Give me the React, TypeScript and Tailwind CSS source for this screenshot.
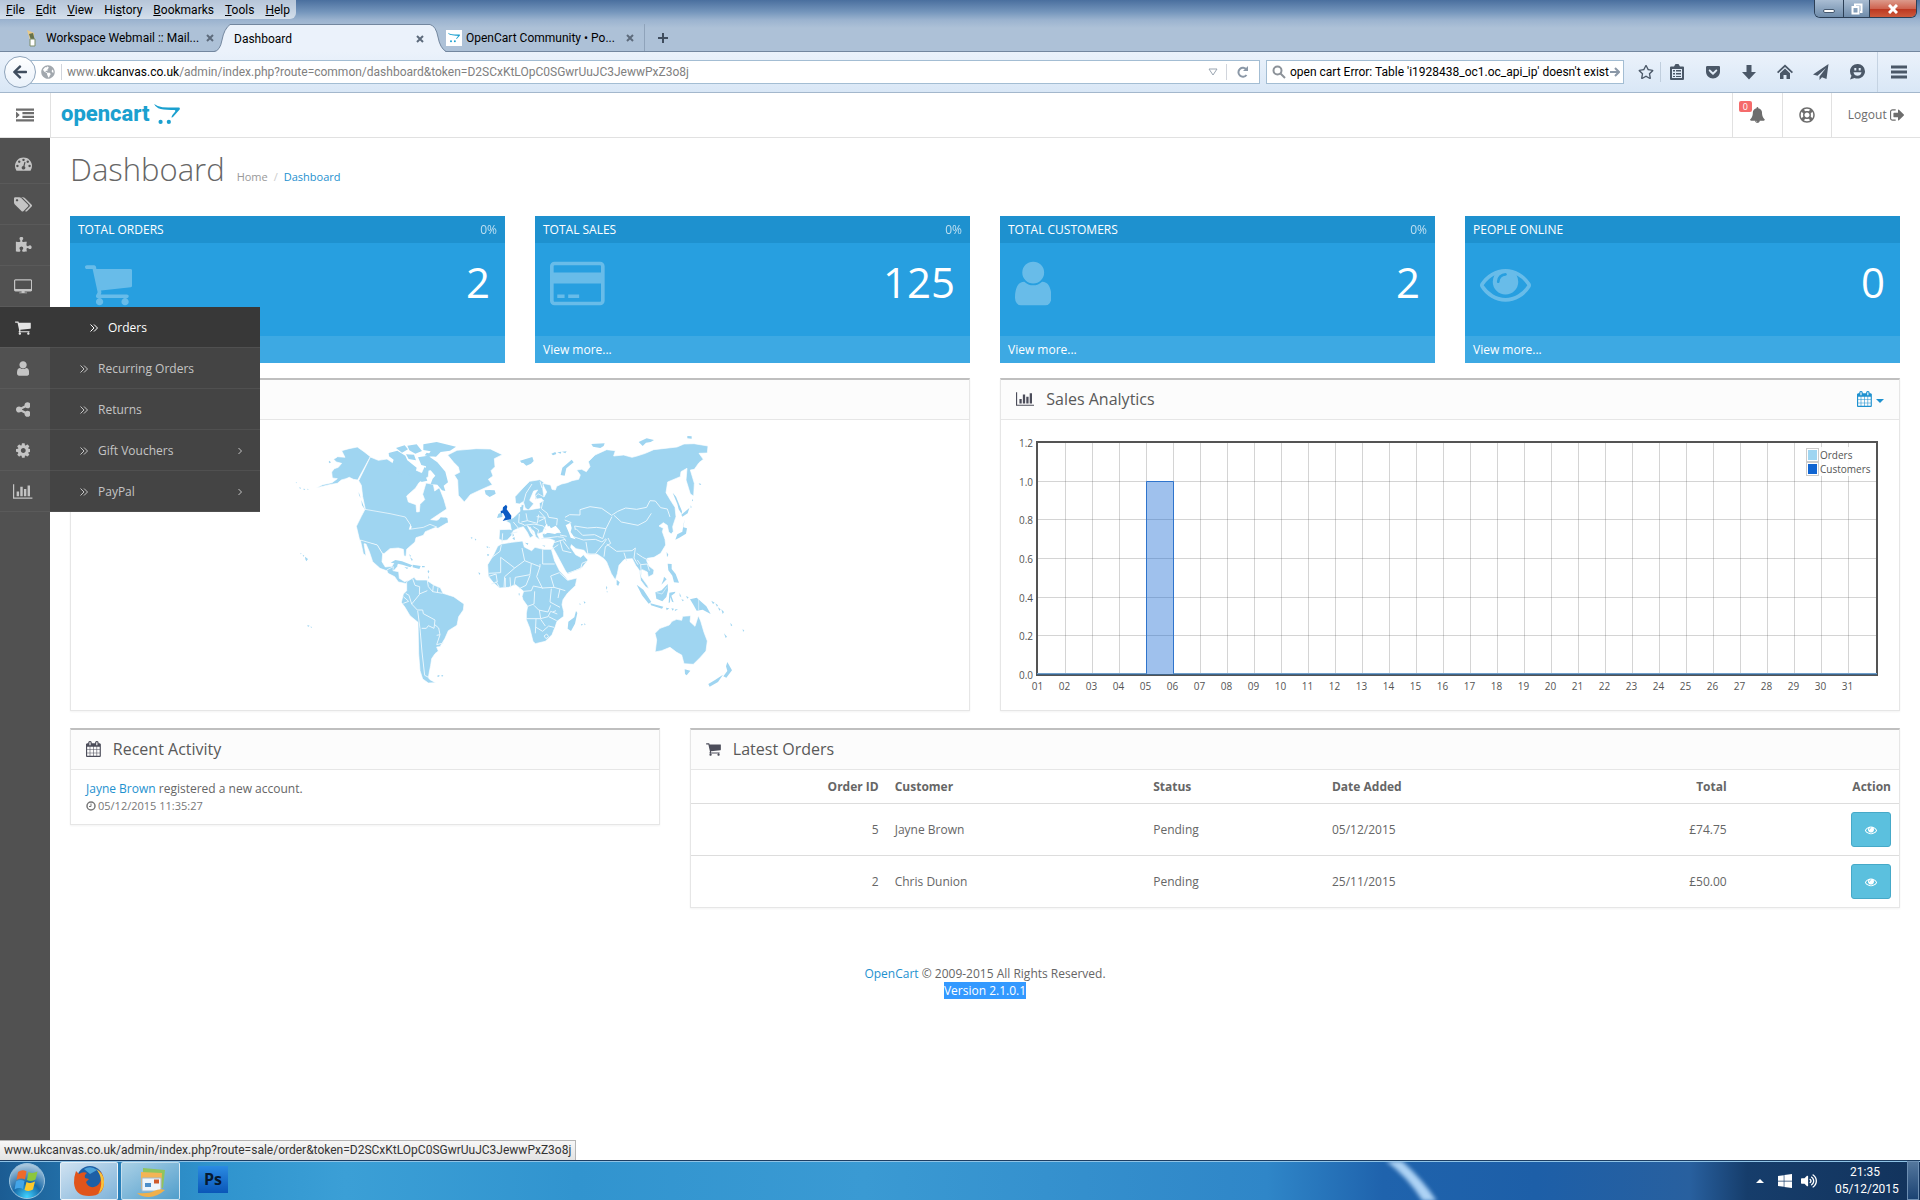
import type { ReactNode } from 'react';
import {
  FaArrowLeft,
  FaGetPocket,
  FaGlobeAmericas,
  FaRegLifeRing,
  FaRegStar,
  FaVolumeUp,
  FaWindows,
} from 'react-icons/fa';

// [viewBox, path]
const glyphs = {
  dashboard: ['0 0 1792 1792', 'M384 1152q0-53-37.5-90.5t-90.5-37.5-90.5 37.5-37.5 90.5 37.5 90.5 90.5 37.5 90.5-37.5 37.5-90.5zm192-448q0-53-37.5-90.5t-90.5-37.5-90.5 37.5-37.5 90.5 37.5 90.5 90.5 37.5 90.5-37.5 37.5-90.5zm428 481l101-382q6-26-7.5-48.5t-38.5-29.5-48 6.5-30 39.5l-101 382q-60 5-107 43.5t-63 98.5q-20 77 20 146t117 89 146-20 89-117q16-60-6-117t-72-91zm660-33q0-53-37.5-90.5t-90.5-37.5-90.5 37.5-37.5 90.5 37.5 90.5 90.5 37.5 90.5-37.5 37.5-90.5zm-640-640q0-53-37.5-90.5t-90.5-37.5-90.5 37.5-37.5 90.5 37.5 90.5 90.5 37.5 90.5-37.5 37.5-90.5zm448 192q0-53-37.5-90.5t-90.5-37.5-90.5 37.5-37.5 90.5 37.5 90.5 90.5 37.5 90.5-37.5 37.5-90.5zm320 448q0 261-141 483-19 29-54 29h-1402q-35 0-54-29-141-221-141-483 0-182 71-348t191-286 286-191 348-71 348 71 286 191 191 286 71 348z'],
  tags: ['0 0 1920 1792', 'M448 448q0-53-37.5-90.5t-90.5-37.5-90.5 37.5-37.5 90.5 37.5 90.5 90.5 37.5 90.5-37.5 37.5-90.5zm1067 576q0 53-37 90l-491 492q-39 37-91 37-53 0-90-37l-715-716q-38-37-64.5-101t-26.5-117v-416q0-52 38-90t90-38h416q53 0 117 26.5t102 64.5l715 714q37 39 37 91zm384 0q0 53-37 90l-491 492q-39 37-91 37-36 0-59-14t-53-45l470-470q37-37 37-90 0-52-37-91l-715-714q-38-38-102-64.5t-117-26.5h224q53 0 117 26.5t102 64.5l715 714q37 39 37 91z'],
  puzzle: ['0 0 1792 1792', 'M1755 1083q0 81-44.5 135t-123.5 54q-41 0-77.5-17.5t-59-38-56.5-38-71-17.5q-110 0-110 124 0 39 16 115t15 115v5q-22 0-33 1-34 3-97.5 11.5t-115.5 13.5-98 5q-61 0-103-26.5t-42-83.5q0-37 17.5-71t38-56.5 38-59 17.5-77.5q0-79-54-123.5t-135-44.5q-84 0-143 45.5t-59 127.5q0 43 15 83t33.5 64.5 33.5 53 15 50.5q0 45-46 89-37 35-117 35-95 0-245-24-9-2-27.5-4t-27.5-4l-13-2q-1 0-3-1-2 0-2-1v-1024q2 1 17.5 3.5t34 5 21.5 3.5q150 24 245 24 80 0 117-35 46-44 46-89 0-22-15-50.5t-33.5-53-33.5-64.5-15-83q0-82 59-127.5t144-45.5q80 0 134 44.5t54 123.5q0 41-17.5 77.5t-38 59-38 56.5-17.5 71q0 57 42 83.5t103 26.5q64 0 180-15t163-17v2q-1 2-3.5 17.5t-5 34-3.5 21.5q-24 150-24 245 0 80 35 117 44 46 89 46 22 0 50.5-15t53-33.5 64.5-33.5 83-15q82 0 127.5 59t45.5 143z'],
  desktop: ['0 0 1920 1792', 'M1792 1120v-832q0-13-9.5-22.5t-22.5-9.5h-1600q-13 0-22.5 9.5t-9.5 22.5v832q0 13 9.5 22.5t22.5 9.5h1600q13 0 22.5-9.5t9.5-22.5zm128-832v972q0 66-47 113t-113 47h-640v96h192q64 0 64 48v48h-832v-48q0-48 64-48h192v-96h-640q-66 0-113-47t-47-113v-972q0-66 47-113t113-47h1600q66 0 113 47t47 113z'],
  cart: ['64 0 1664 1792', 'M704 1536q0 52-38 90t-90 38-90-38-38-90 38-90 90-38 90 38 38 90zm896 0q0 52-38 90t-90 38-90-38-38-90 38-90 90-38 90 38 38 90zm128-1088v512q0 24-16.5 42.5t-40.5 21.5l-1044 122q13 60 13 70 0 16-24 64h920q26 0 45 19t19 45-19 45-45 19h-1024q-26 0-45-19t-19-45q0-11 8-31.5t16-36 21.5-40 15.5-29.5l-177-823h-204q-26 0-45-19t-19-45 19-45 45-19h256q16 0 28.5 6.5t19.5 15.5 13 24.5 8 26 5.5 29.5 4.5 26h1201q26 0 45 19t19 45z'],
  user: ['256 0 1280 1792', 'M1536 1399q0 109-62.5 187t-150.5 78h-854q-88 0-150.5-78t-62.5-187q0-85 8.5-160.5t31.5-152 58.5-131 94-89 134.5-34.5q131 128 313 128t313-128q76 0 134.5 34.5t94 89 58.5 131 31.5 152 8.5 160.5zm-256-887q0 159-112.5 271.5t-271.5 112.5-271.5-112.5-112.5-271.5 112.5-271.5 271.5-112.5 271.5 112.5 112.5 271.5z'],
  share: ['128 0 1536 1792', 'M1344 1024q133 0 226.5 93.5t93.5 226.5-93.5 226.5-226.5 93.5-226.5-93.5-93.5-226.5q0-12 2-34l-360-180q-92 86-218 86-133 0-226.5-93.5t-93.5-226.5 93.5-226.5 226.5-93.5q126 0 218 86l360-180q-2-22-2-34 0-133 93.5-226.5t226.5-93.5 226.5 93.5 93.5 226.5-93.5 226.5-226.5 93.5q-126 0-218-86l-360 180q2 22 2 34t-2 34l360 180q92-86 218-86z'],
  cog: ['128 0 1536 1792', 'M1152 896q0-106-75-181t-181-75-181 75-75 181 75 181 181 75 181-75 75-181zm512-109v222q0 12-8 23t-20 13l-185 28q-19 54-39 91 35 50 107 138 10 12 10 25t-9 23q-27 37-99 108t-94 71q-12 0-26-9l-138-108q-44 23-91 38-16 136-29 186-7 28-36 28h-222q-14 0-24.5-8.5t-11.5-21.5l-28-184q-49-16-90-37l-141 107q-10 9-25 9-14 0-25-11-126-114-165-168-7-10-7-23 0-12 8-23 15-21 51-66.5t54-70.5q-27-50-41-99l-183-27q-13-2-21-12.5t-8-23.5v-222q0-12 8-23t19-13l186-28q14-46 39-92-40-57-107-138-10-12-10-24 0-10 9-23 26-36 98.5-107.5t94.5-71.5q13 0 26 10l138 107q44-23 91-38 16-136 29-186 7-28 36-28h222q14 0 24.5 8.5t11.5 21.5l28 184q49 16 90 37l142-107q9-9 24-9 13 0 25 10 129 119 165 170 7 8 7 22 0 12-8 23-15 21-51 66.5t-54 70.5q26 50 41 98l183 28q13 2 21 12.5t8 23.5z'],
  chart: ['0 0 2048 1792', 'M640 896v512h-256v-512h256zm384-512v1024h-256v-1024h256zm1024 1152v128h-2048v-1536h128v1408h1920zm-640-896v768h-256v-768h256zm384-384v1152h-256v-1152h256z'],
  eye: ['0 0 1792 1792', 'M1664 960q-152-236-381-353 61 104 61 225 0 185-131.5 316.5t-316.5 131.5-316.5-131.5-131.5-316.5q0-121 61-225-229 117-381 353 133 205 333.5 326.5t434.5 121.5 434.5-121.5 333.5-326.5zm-720-384q0-20-14-34t-34-14q-125 0-214.5 89.5t-89.5 214.5q0 20 14 34t34 14 34-14 14-34q0-86 61-147t147-61q20 0 34-14t14-34zm848 384q0 34-20 69-140 230-376.5 368.5t-499.5 138.5-499.5-139-376.5-368q-20-35-20-69t20-69q140-229 376.5-368t499.5-139 499.5 139 376.5 368q20 35 20 69z'],
  card: ['0 0 1920 1792', 'M1760 128q66 0 113 47t47 113v1216q0 66-47 113t-113 47h-1600q-66 0-113-47t-47-113v-1216q0-66 47-113t113-47h1600zm-1600 128q-13 0-22.5 9.5t-9.5 22.5v224h1664v-224q0-13-9.5-22.5t-22.5-9.5h-1600zm1600 1280q13 0 22.5-9.5t9.5-22.5v-608h-1664v608q0 13 9.5 22.5t22.5 9.5h1600zm-1504-128v-128h256v128h-256zm384 0v-128h384v128h-384z'],
  calendar: ['64 0 1664 1792', 'M192 1664h288v-288h-288v288zm352 0h320v-288h-320v288zm-352-352h288v-320h-288v320zm352 0h320v-320h-320v320zm-352-384h288v-288h-288v288zm736 736h320v-288h-320v288zm-384-736h320v-288h-320v288zm768 736h288v-288h-288v288zm-384-352h320v-320h-320v320zm-352-864v-288q0-13-9.5-22.5t-22.5-9.5h-64q-13 0-22.5 9.5t-9.5 22.5v288q0 13 9.5 22.5t22.5 9.5h64q13 0 22.5-9.5t9.5-22.5zm736 864h288v-320h-288v320zm-384-384h320v-288h-320v288zm384 0h288v-288h-288v288zm32-480v-288q0-13-9.5-22.5t-22.5-9.5h-64q-13 0-22.5 9.5t-9.5 22.5v288q0 13 9.5 22.5t22.5 9.5h64q13 0 22.5-9.5t9.5-22.5zm384-64v1280q0 52-38 90t-90 38h-1408q-52 0-90-38t-38-90v-1280q0-52 38-90t90-38h128v-96q0-66 47-113t113-47h64q66 0 113 47t47 113v96h384v-96q0-66 47-113t113-47h64q66 0 113 47t47 113v96h128q52 0 90 38t38 90z'],
  bell: ['64 0 1664 1792', 'M912 1696q0-16-16-16-59 0-101.5-42.5t-42.5-101.5q0-16-16-16t-16 16q0 73 51.5 124.5t124.5 51.5q16 0 16-16zm816-288q0 52-38 90t-90 38h-448q0 106-75 181t-181 75-181-75-75-181h-448q-52 0-90-38t-38-90q50-42 91-88t85-119.5 74.5-158.5 50-206 19.5-260q0-152 117-282.5t307-158.5q-8-19-8-39 0-40 28-68t68-28 68 28 28 68q0 20-8 39 190 28 307 158.5t117 282.5q0 139 19.5 260t50 206 74.5 158.5 85 119.5 91 88z'],
  signOut: ['64 0 1600 1792', 'M704 1440q0 4 1 20t.5 26.5-3 23.5-10 19.5-20.5 6.5h-320q-119 0-203.5-84.5t-84.5-203.5v-704q0-119 84.5-203.5t203.5-84.5h320q13 0 22.5 9.5t9.5 22.5q0 4 1 20t.5 26.5-3 23.5-10 19.5-20.5 6.5h-320q-66 0-113 47t-47 113v704q0 66 47 113t113 47h312l11.5 1 11.5 3 8 5.5 7 9 2 13.5zm928-544q0 26-19 45l-544 544q-19 19-45 19t-45-19-19-45v-288h-448q-26 0-45-19t-19-45v-384q0-26 19-45t45-19h448v-288q0-26 19-45t45-19 45 19l544 544q19 19 19 45z'],
  indent: ['0 0 1792 1792', 'M352 896q0 14-9 23l-288 288q-9 9-23 9-13 0-22.5-9.5t-9.5-22.5v-576q0-13 9.5-22.5t22.5-9.5q14 0 23 9l288 288q9 9 9 23zM0 256h1792v224h-1792zM640 608h1152v224h-1152zM640 960h1152v224h-1152zM0 1312h1792v224h-1792z'],
} as const;

type GlyphName = keyof typeof glyphs;

function Glyph({ name, className }: { name: GlyphName; className: string }) {
  const [viewBox, d] = glyphs[name];
  return (
    <svg viewBox={viewBox} className={`w-auto shrink-0 fill-current ${className}`} aria-hidden="true">
      <path d={d} />
    </svg>
  );
}

const menus = ['File', 'Edit', 'View', 'History', 'Bookmarks', 'Tools', 'Help'];
const accessKey: Record<string, number> = { History: 2 };

const sidebar: { icon: GlyphName; label: string; active?: boolean }[] = [
  { icon: 'dashboard', label: 'Dashboard' },
  { icon: 'tags', label: 'Catalog' },
  { icon: 'puzzle', label: 'Extensions' },
  { icon: 'desktop', label: 'Design' },
  { icon: 'cart', label: 'Sales', active: true },
  { icon: 'user', label: 'Customers' },
  { icon: 'share', label: 'Marketing' },
  { icon: 'cog', label: 'System' },
  { icon: 'chart', label: 'Reports' },
];

const salesMenu = [
  { label: 'Orders', active: true },
  { label: 'Recurring Orders' },
  { label: 'Returns' },
  { label: 'Gift Vouchers', more: true },
  { label: 'PayPal', more: true },
];

const tiles: { title: string; value: string; icon: GlyphName; percent?: string }[] = [
  { title: 'TOTAL ORDERS', value: '2', icon: 'cart', percent: '0%' },
  { title: 'TOTAL SALES', value: '125', icon: 'card', percent: '0%' },
  { title: 'TOTAL CUSTOMERS', value: '2', icon: 'user', percent: '0%' },
  { title: 'PEOPLE ONLINE', value: '0', icon: 'eye' },
];

const orders = [
  { id: 5, customer: 'Jayne Brown', status: 'Pending', date: '05/12/2015', total: '£74.75' },
  { id: 2, customer: 'Chris Dunion', status: 'Pending', date: '25/11/2015', total: '£50.00' },
];

function CloseMark() {
  return (
    <svg viewBox="0 0 8 8" className="h-2 w-2 shrink-0 stroke-[#5d6b7c] stroke-2">
      <path d="M1 1l6 6M7 1l-6 6" />
    </svg>
  );
}

function CartMark({ className }: { className: string }) {
  return (
    <svg viewBox="0 0 28 24" className={`fill-[#1ba0cf] ${className}`} aria-hidden="true">
      <path d="M0 0q4 3 9 3.500 8 .6 18 .4 1.500.3.800 2l-7 8q-1 1-2 .6 1-3 4-6 .8-1.800-.8-2-12 .4-17.500-1.800Q1 3 0 0z" />
      <circle cx="7" cy="19.500" r="2.300" />
      <circle cx="16" cy="19.500" r="2.300" />
    </svg>
  );
}

function ToolIcon({ children }: { children: ReactNode }) {
  return (
    <svg viewBox="0 0 16 16" className="h-4 w-4 fill-current">
      {children}
    </svg>
  );
}

function Browser() {
  return (
    <header className="font-['Roboto','Open_Sans',sans-serif] text-xs text-black">
      <div className="bg-[linear-gradient(180deg,#4a6f9e_0px,#7596bc_12px,#9bb3cf_20px,#adc1d7_28px,#adc1d7_100%)]">
        <div className="flex h-6 items-start justify-between">
          <nav className="flex h-[19px] items-center gap-[11px] rounded-br-md bg-white/60 px-[6px]">
            {menus.map((menu) => {
              const at = accessKey[menu] ?? 0;
              return (
                <button key={menu} type="button" className="leading-4">
                  {menu.slice(0, at)}
                  <span className="underline">{menu[at]}</span>
                  {menu.slice(at + 1)}
                </button>
              );
            })}
          </nav>
          <div className="mr-[3px] flex h-[18px] overflow-hidden rounded-b-md border border-t-0 border-[#2c3f56]">
            <button type="button" aria-label="Minimize" className="flex w-7 items-end justify-center bg-linear-to-b from-[#a9bdd3] to-[#6f8cab] pb-1">
              <span className="h-1 w-3 rounded-xs border border-[#44586f] bg-white" />
            </button>
            <button type="button" aria-label="Restore" className="flex w-[27px] items-center justify-center border-x border-[#2c3f56] bg-linear-to-b from-[#a9bdd3] to-[#6f8cab]">
              <svg viewBox="0 0 12 12" className="h-3 w-3 fill-none stroke-white stroke-2">
                <path d="M4 3V1.500h6.500V9H9M1.500 4h6v6.500h-6z" />
              </svg>
            </button>
            <button type="button" aria-label="Close" className="flex w-[46px] items-center justify-center bg-[linear-gradient(180deg,#dc9a8b_0%,#cf6450_50%,#bb3620_52%,#cd5a3c_100%)]">
              <svg viewBox="0 0 10 10" className="h-[10px] w-[10px] stroke-white stroke-[3px]">
                <path d="M1 1l8 8M9 1l-8 8" />
              </svg>
            </button>
          </div>
        </div>
        <div className="flex h-7 items-stretch border-b border-[#73879f] whitespace-nowrap">
          <div className="flex w-[214px] items-center pl-6">
            <svg viewBox="0 0 14 18" className="h-[18px] w-[14px] shrink-0" aria-hidden="true">
              <path d="M3 1l7 3v5l-4 2z" fill="#e8c98a" />
              <path d="M5 5l4-1 2 8-3 2z" fill="#66724a" />
              <path d="M6 10h5v7H6z" fill="#fff" stroke="#7c8d6a" strokeWidth="1" />
            </svg>
            <span className="flex-1 pl-2">Workspace Webmail :: Mail...</span>
            <CloseMark />
          </div>
          <div className="-mb-px flex w-[232px]">
            <svg viewBox="0 0 16 28" className="h-7 w-4 shrink-0">
              <path d="M0 28Q6 27 8 16T16 .5V28z" fill="#ebf2fb" />
              <path d="M0 27.500Q6 27 8 16T16 .5" fill="none" stroke="#73879f" />
            </svg>
            <div className="flex flex-1 items-center justify-between border-t border-[#73879f] bg-[#ebf2fb] pr-[6px] pl-1">
              <span>Dashboard</span>
              <CloseMark />
            </div>
            <svg viewBox="0 0 16 28" className="h-7 w-4 shrink-0">
              <path d="M0 .5Q6 2 8 13T16 28H0z" fill="#ebf2fb" />
              <path d="M0 .5Q6 2 8 13T16 27.500" fill="none" stroke="#73879f" />
            </svg>
          </div>
          <div className="flex w-[199px] items-center border-r border-[#8fa3ba] pr-[10px]">
            <span className="flex h-4 w-4 shrink-0 items-center justify-center bg-white">
              <CartMark className="h-3 w-3" />
            </span>
            <span className="flex-1 pl-1">OpenCart Community • Po...</span>
            <CloseMark />
          </div>
          <button type="button" aria-label="New tab" className="flex w-9 items-center justify-center">
            <svg viewBox="0 0 10 10" className="h-[10px] w-[10px] stroke-[#3f4d5e] stroke-2">
              <path d="M5 0v10M0 5h10" />
            </svg>
          </button>
        </div>
      </div>
      <div className="flex h-[41px] items-center border-b border-[#a3b7cc] bg-linear-to-b from-[#ebf2fb] to-[#d9e7f6] pl-1">
        <button type="button" aria-label="Back" className="z-10 flex h-8 w-8 shrink-0 items-center justify-center rounded-full border border-[#8fa4bb] bg-linear-to-b from-white to-[#e9f1fa] text-[#3f4d5e]">
          <FaArrowLeft className="h-4 w-4" />
        </button>
        <div className="-ml-3 flex h-6 flex-1 items-center border border-[#a3bdd3] bg-white pl-4">
          <FaGlobeAmericas className="h-[14px] w-[14px] shrink-0 text-[#a2a8ae]" />
          <span className="ml-[6px] h-4 w-px bg-gray-300" />
          <div className="flex-1 pl-[5px] whitespace-nowrap text-[#808080]">
            www.<span className="text-black">ukcanvas.co.uk</span>/admin/index.php?route=common/dashboard&amp;token=D2SCxKtLOpC0SGwrUuJC3JewwPxZ3o8j
          </div>
          <svg viewBox="0 0 10 8" className="h-2 w-[10px] fill-none stroke-[#9aa5b1]">
            <path d="M1 1h8L5 7z" />
          </svg>
          <span className="ml-2 h-4 w-px bg-gray-300" />
          <button type="button" aria-label="Reload" className="px-[10px]">
            <svg viewBox="0 0 12 12" className="h-3 w-3 fill-none stroke-[#8b98a7] stroke-2">
              <path d="M9.500 9A4.500 4.500 0 1 1 9.500 3.500" />
              <path d="M11 0v5H6z" className="fill-[#8b98a7] stroke-none" />
            </svg>
          </button>
        </div>
        <label className="ml-[6px] flex h-6 w-[358px] items-center border border-[#a3bdd3] bg-white pr-[3px] pl-[5px]">
          <svg viewBox="0 0 14 14" className="h-[14px] w-[14px] shrink-0 fill-none stroke-[#8c9299] stroke-2">
            <circle cx="5.500" cy="5.500" r="4" />
            <path d="M8.500 8.500l4.500 4.500" />
          </svg>
          <input aria-label="Search" className="min-w-0 flex-1 pl-1 outline-none" defaultValue="open cart Error: Table 'i1928438_oc1.oc_api_ip' doesn't exist" />
          <svg viewBox="0 0 10 10" className="h-[10px] w-[10px] shrink-0 fill-none stroke-[#8b98a7] stroke-2">
            <path d="M0 5h8M5 1l4 4-4 4" />
          </svg>
        </label>
        <div className="flex items-center text-[#4b5868]">
          <button type="button" aria-label="Bookmark" className="flex w-9 justify-center pl-2">
            <FaRegStar className="h-4 w-4" />
          </button>
          <span className="h-5 w-px bg-[#c0cedd]" />
          <button type="button" aria-label="Bookmarks list" className="flex w-8 justify-center">
            <ToolIcon>
              <path fillRule="evenodd" d="M2 2.500h3L6.500 0h3L11 2.500h3a1 1 0 0 1 1 1V15a1 1 0 0 1-1 1H2a1 1 0 0 1-1-1V3.500a1 1 0 0 1 1-1zM3 5v9h10V5z" />
              <path d="M4 6h2v1.500H4zM7 6h5v1.500H7zM4 9h2v1.500H4zM7 9h5v1.500H7zM4 12h2v1H4zM7 12h5v1H7z" />
            </ToolIcon>
          </button>
          <button type="button" aria-label="Pocket" className="flex w-10 justify-center">
            <FaGetPocket className="h-4 w-4" />
          </button>
          <button type="button" aria-label="Downloads" className="flex w-8 justify-center">
            <ToolIcon>
              <path d="M5.500 1h5v7H15l-7 7.500L1 8h4.500z" />
            </ToolIcon>
          </button>
          <button type="button" aria-label="Home" className="flex w-10 justify-center">
            <ToolIcon>
              <path d="M8 .5L16 8l-1.200 1.300L8 3 1.200 9.300 0 8z" />
              <path d="M8 4.500l5 4.700V15H9.500v-4h-3v4H3V9.200z" />
            </ToolIcon>
          </button>
          <button type="button" aria-label="Share" className="flex w-8 justify-center">
            <ToolIcon>
              <path d="M15.500 0L0 10.500l4.500 1.200L13 4l-6.500 8.500V16l2.500-2.700L13.500 15z" />
            </ToolIcon>
          </button>
          <button type="button" aria-label="Chat" className="flex w-10 justify-center">
            <ToolIcon>
              <path fillRule="evenodd" d="M8.500 0A7.300 7.300 0 0 1 16 7.200c0 4-3.400 7.300-7.500 7.300-1.100 0-2-.2-3-.6L1 15.500l1.500-3.700A7 7 0 0 1 1 7.200C1 3.200 4.400 0 8.500 0zM5.300 4v2.500h2V4zM9.700 4v2.500h2V4zM4.500 8.300c.5 4.700 7.500 4.700 8 0z" />
            </ToolIcon>
          </button>
          <span className="h-10 w-px bg-[#c5d3e2]" />
          <button type="button" aria-label="Menu" className="flex w-[42px] justify-center">
            <svg viewBox="0 0 16 14" className="h-[14px] w-4 stroke-current stroke-[3px]">
              <path d="M0 2h16M0 7h16M0 12h16" />
            </svg>
          </button>
        </div>
      </div>
    </header>
  );
}

function AdminHeader() {
  return (
    <div className="flex h-[45px] items-stretch border-b border-[#e1e1e1] bg-white text-[#6d6d6d]">
      <button type="button" aria-label="Toggle menu" className="flex w-[51px] items-center justify-center border-r border-[#e1e1e1]">
        <Glyph name="indent" className="h-[18px]" />
      </button>
      <a href="#home" className="flex flex-1 items-start gap-1 pt-[9px] pl-[10px] font-['Roboto','Liberation_Sans',sans-serif] text-[22px] leading-6 font-extrabold text-[#1ba0cf]">
        opencart
        <CartMark className="mt-[2px] h-[22px] w-[26px]" />
      </a>
      <a href="#alerts" aria-label="Alerts" className="relative flex w-[50px] items-center justify-center border-l border-[#e1e1e1]">
        <Glyph name="bell" className="h-4" />
        <span className="absolute top-2 left-[6px] rounded-xs bg-[#f56b6b] px-1 text-[9px] leading-[11px] text-white">0</span>
      </a>
      <a href="#help" aria-label="Help" className="flex w-[49px] items-center justify-center border-l border-[#e1e1e1]">
        <FaRegLifeRing className="h-4 w-4" />
      </a>
      <a href="#logout" className="flex items-center gap-[3px] border-l border-[#e1e1e1] px-4 text-xs">
        Logout <Glyph name="signOut" className="h-4" />
      </a>
    </div>
  );
}

function Sidebar() {
  return (
    <nav className="z-20 w-[50px] shrink-0 bg-[#515151] pt-[5px] text-[#c4c4c4]">
      {sidebar.map((item) => (
        <div key={item.label} className="relative">
          <a
            href={`#${item.label.toLowerCase()}`}
            aria-label={item.label}
            className={`flex h-[41px] items-center justify-center border-b border-[#5a5a5a] pr-1 ${item.active ? 'bg-[#383838] text-[#e4e4e4]' : ''}`}
          >
            <Glyph name={item.icon} className="h-[17px]" />
          </a>
          {item.active && <SalesMenu />}
        </div>
      ))}
    </nav>
  );
}

function SalesMenu() {
  return (
    <ul className="absolute top-0 left-full w-[210px] bg-[#444] text-xs text-[#c4c4c4]">
      {salesMenu.map((item) => (
        <li key={item.label}>
          <a
            href="#sale"
            className={`flex h-[41px] items-center border-b border-[#505050] pt-[2px] pr-[18px] ${item.active ? 'bg-[#383838] pl-10 text-white' : 'pl-[30px]'}`}
          >
            <svg viewBox="0 0 8 8" className="mr-[10px] h-2 w-2 fill-none stroke-current">
              <path d="M.5.500L4 4 .5 7.500M4 .5L7.500 4 4 7.500" />
            </svg>
            {item.label}
            {item.more && (
              <svg viewBox="0 0 4 8" className="ml-auto h-2 w-1 fill-none stroke-current">
                <path d="M.5 1l3 3-3 3" />
              </svg>
            )}
          </a>
        </li>
      ))}
    </ul>
  );
}

function Panel({ icon, title, action, className = '', children }: { icon?: GlyphName; title?: string; action?: ReactNode; className?: string; children: ReactNode }) {
  return (
    <section className={`self-start border border-t-2 border-[#e6e6e6] border-t-[#bfbfbf] bg-white shadow-xs ${className}`}>
      <div className="flex h-10 items-center border-b border-[#e6e6e6] bg-[#fcfcfc] px-[15px] pb-[2px] text-[#4c4d5a]">
        {icon && <Glyph name={icon} className="h-4" />}
        {title && <h3 className="flex-1 pl-3 text-base leading-5 text-[#595959]">{title}</h3>}
        {action}
      </div>
      {children}
    </section>
  );
}

function WorldMap() {
  return (
    <svg viewBox="-15 45 1410 780" className="mx-auto block h-[260px]" role="img" aria-label="World map">
      <g fill="#9fd5f1" stroke="#fff" strokeWidth="2" strokeLinejoin="round">
        <path d="M155 92l22-6 25-5 20 14 19 15-38 70-13-2-12-6-10 4-14 4-12 10-24 4-40 10 20-10 28-6 16-12-15-2-2-18 8-10 12-4 10-12-16-4-8-8 12-8 22 2z" />
        <path d="M241 111l24 10 26-4 18 12 26 20 26 6 14-6 20 9 8-18 14 8-2 22-28 18-10 16-27 24 5 18 23 8 2 22 8-1 2-22 14-14-6-16 10-34 22 4 4 20 14-10 14 36 8 28-24 16-24 16 18 2 28-10 6 16-30 18-24-7-18 8-42 8 4-14-16-24-46-10-75-13-9-43-4-34-8-14z" />
        <path d="M473 105l28-14 58-5 42 1 36 17-24 12 2 24-12 12 6 16-14 10 12 16-36 16-30 14-18 22-18-20-2-45-10-16 16-8-4-16-14-14z" />
        <path d="M225 268l75 13 46 10 16 24-4 13 42-6 20-9 20 8-34 14-6 11-22 7-3 13-25 22-2 21-6-1-2-20-15-4-25 2-18 15-5-1-16-25-36-9-16-5-10-42 15-30z" />
        <path d="M211 360l51 15 16 27-2 23 10 16 20-2 7-12 14-3-5 16-16 18-36-13-22-20-10-30-10-23-6-1 6 36-8-6z" />
        <path d="M290 450l20-10-1 12 17 3 2 20 16 10 12-5-6 11-25-5-11-16-20-10z" />
        <path d="M350 485l22-13 7 8h30l22 15 20 8 8 17 32 10 31 22-2 18-14 20-5 26-26 16-10 23-15 25-10 1 5 12-10 8-10 15-3 20-4 20-3 17 5 6 17 9-22 1-17-12-8-25-4-50-2-95-24-20-15-25-11-15 6-25 10-10z" />
        <g transform="translate(570 0)">
          <path d="M107 250l-2-20 24-26 20-20 30-5 12 8-3 18 4 28-26 5-1-16 8-12-12 3-12 28 12 10-16 20-10-8-5-18-12 7z" />
          <path d="M188 190l24 5 4 13 10 2 4-11 15-7 17-4 14-6 20-4 5-13-11-15 15-2 14 7 11-15-5-15 20-20 35-16 26 3-5 16 30-3 25 7 15-4 25-8 25-11 70-8 21-9 30-1 42 7-2 21-25 1 13 18-13 10-14 20-12 2 12 40-2 38-10-6-13-42 3-35-18 10-2 15-38 16-5 32 13 22 14 22 3 28-10 30 2 14-6 8-8-6-4-20-12-8-13 10 13 7-3 10 8 23 2 17-15 25-20 12-20 3-2 7 7 16 15 12-2 13-15 8-3-15-15-7-7 4 4 18 18 25 5 10-10-5-15-20-4-30-11-15-10-20-15 1-10 2-15 17-5 25-6 19-12-19-14-35-8-10-20-13-32-2-8-10-24-5-14-12-2 8 15 22 15 8 8-8 14 16-17 22-43 20-7-8-33-62-7-12 7-18-12-5-22-3-3-12 15-5 40 1-8-8-27 2-7-20-8 15-4 10-16 5 8 18-13-10-5-16-20-17 10 20 8 10-10 7-8-17-12-17-13 4-17 8-6 15-12 13-15 2-10-5 2-28 31-1 4 2-4-20-14-8 14-4 12-6 12-12 8-8 2-18h8l-2 16 22-1 28-5-2-14 12-8-6-7-14 2-3-8 7-8 18 10 8-15-8-15z" />
          <path d="M64 372l31-5 33-4 5 18 22 11 10-10 25 6h24l10 35 15 30 20 21 4 7 28-7-5 23-23 22-14 20-3 15 5 20v15l-20 15-5 15-10 25-20 20-30 7-7-7-10-40-10-25v-20l4-20-14-20-3-10 5-15-12-10-13-10-20 8-27 2-18-15-16-20-2-35 18-30 12-25z" />
          <path d="M526 692l4-32-5-20 15-15 28-10 8-11 14-6 15 3 3-12 24-2-2 18 15 14 10-32 7 16 10 34 10 26-4 30-18 20-20 20-28-2-7-26-15-8-20-15-25 10-20 4z" />
        </g>
      </g>
      {/* islands */}
      <g fill="#9fd5f1">
        <path d="M296 99l26-7 24 15 6 14 28 22-5 20-30-6-22-8-18-12 6-18-14-10zM384 112l30-5 28 20 24 28 8 32-13 10 5 16-10-2-14-17-20-2 6-16 8-9-14-16-16 2 2-14-14-4zM318 84l26-8 10 12-18 10zM352 77l28-4 16 20-20 8-18-10zM400 73l40-7 58 14-18 12-28 4-14 14-26-2 10-14-22-4zM348 103l24 1 6 17-22-4zM390 166l16 2 6 14-18 4zM410 98l16 4-6 8-16-4zM318 152l22 4-4 8-14-4zM354 160l10 0 4 10-8 0z" />
        <path d="M584 211l14-1 16 1 3 10-18 10-12-8zM424 302l10 2-4 4zM452 292l20 2 2 14-14-4-16-2zM206 216l6 18-5-8zM214 240l8 22 4 8-10-14z" />
        <path d="M302 428l14-8 20 4 31 12-6 6-24-8-20-4zM368 434l24 4-4 9-20-5zM343 441l12 2-4 4zM396 438h8v4h-8zM414 450l4 4-2 6-3-4zM415 466l3 8-3 2zM358 402l5 6-3 2zM360 412l8 6-2 6z" />
        <path d="M443 766h6l-2 4h-5zM454 765l6 1-4 5zM31 399l4 2-3 2zM38 404l5 3-3 3zM45 410l9 7-5 7-3-6zM17 186l4 2-2 2zM28 201l5 3-3 3zM40 206l6 1-4 4zM52 206l4 2-3 2zM118 122l5 5-4 3-3-4zM542 351l6 2-3 4zM554 356l5 1-2 5zM565 457l6 3-3 5zM52 615l7 2-5 4zM62 619l4 3-3 2zM596 380l3 2-2 3zM592 402l4 2-2 4zM686 522l3 3-2 2z" />
        <g transform="translate(570 0)">
          <path d="M265 605l18-13 5-19 4 6-7 32-12 22-10-7zM614 748l17 4-11 14-5-4zM742 726l14 25-17 22-9-4 12-16-4-14zM729 764l-15 22-25 14-4-8 20-12z" />
          <path d="M470 494l20 15 24 37-8 5-20-25zM511 550l39 10-4 6-33-10zM526 517l19-6 18-19 1 19-5 20-12 13-18-8zM568 518l18-3-1 4-11 8 7 20-5-2-5-14-1 16-4 2zM630 538l20-5 29 26 13 23-24-13-18 3-10-18zM563 431l12 1v15l12 15 10 26-15-1-5-20-12-16zM614 298l-4 24 11 3-3 16-20 12-12 6 6-16 15-8 4-24zM578 218l10 12 18 44-1 8-9-14-4-16zM604 284l24-20-5 16-16 10zM410 479l9 8-4 10-5-2zM242 165l5-22 28-24 6 8-22 18-5 22zM120 122l37-11 4 12-8 8-14 6-9-8-6-1zM334 72l40-2-3 8-10 6-22-4zM476 66l24-11 22 5-10 6-14 2-10 10zM622 48l13 1v7l-13-1zM214 101l12-5 3 6-10 4zM232 97l12-2-2 6zM246 95l14-1-4 6zM120 262l8-2v14l-6 2zM560 396l5 8-4 8zM97 356l6-6 2 10zM186 376l10 1-2 3zM135 368l10 2-2 5zM98 340l4 6-4 4z" />
          <path d="M55 282l12-7v16l-16 3z" />
          <path d="M558 563l10 2-8 6zM574 565l8 1-4 6zM586 568l8 0-10 6zM599 518l5 14-5-4zM604 538l8 2-4 4zM618 528l8 4-4 4zM694 542l10 6-5 4zM706 550l8 6-3 4zM714 562l8 6-4 4zM724 568l8 8-4 6zM732 640l9 10-4 4zM788 627l5 5-4 3zM751 608l6 8-4 3zM311 544l6 3-4 4zM298 550l4 2-2 4zM303 612l6 1-4 4zM312 610l5 3-3 3zM378 497l4 6-3 6zM380 512l3 3-2 3zM656 190l8 2-4 4zM636 236l3 6-3 2zM632 256l3 6-3 2zM552 470l8 8-16 16 6-14zM20 378l5 3-4 4zM22 402l6 2-5 5zM116 518l4 4-3 3zM40 458l2 4-4 2z" />
        </g>
      </g>
      <g transform="translate(570 0)">
        <path d="M257 316l14-8 4 16-3 12 10 14 5 8-15-5-6-16zM196 324l12-7 5 8 14-8 14 17-16 8-22-4-10 6z" fill="#fff" />
        <path d="M69 262l9-8 4 6-2 8 6 8 8 11-1 11-14 2-11 3 8-11-5-10-4-6zM62 273l7-2-1 8-5 1z" fill="#0b5bc4" />
        <g fill="none" stroke="#e8f6fd" strokeWidth="3" strokeLinejoin="round">
          {/* asia */}
          <path d="M255 292l14-8 31 1v-16l30-9 35 5 30 21 18-12 24-10 33 4 30-6 10-20 16 1 16 20 20 4 8 24M402 286l22 20 50 10 25-13 15-23M254 300l20 8M286 330l-2-12 38 6 28-2 28 4 18-36M288 326l20 20 36-2 24 12 10-30M280 350l30 10 36-2 20 8 12-10M318 366l6 38M326 404l20-2 24-30 10-14M372 410l4-30 16-10-8-16M380 372l30 22 46-2 10-8-4 30 12 20M432 398l8 25M470 400l18 12 20 10M472 420l10 14 20-2 6 20M482 434l2 30" />
          {/* middle east */}
          <path d="M184 356l48-6 18 2 8 12M222 368l18-6 16-4M240 345l20 4M240 362l8 30 26 6M215 388l20-14M250 364l18 24M262 460l40-14 4-16 14-6" />
          {/* europe */}
          <path d="M92 340l20-4M68 340l-2 28M100 306l18 22M118 282l-2 26 16 6M138 280l4 22-18 4M142 302l30 8 4-26M132 316l30-4 28 6 8 12M150 320l10 22M160 320l16 10-4 16M178 274l18 20-20 10M190 240l-6 26 18 14 4 12 26 4-2 20M130 250l8-30 18-28M180 184l6 20M170 290l24 2 4 20" />
          {/* africa */}
          <path d="M64 374l-4 20-24 18M62 412v46l-36 2M62 412l42 32 30-22-8-38M104 444l-30 26-2 32M134 422l20 8 26 10v-8M188 388v44h36M180 440l-10 30 18 36M154 430l-4 34-44 8M76 474v28M90 472l2 30M106 472l-4 26M150 466l-12 30-20 10M24 470l24-8 4 24-18 6M130 514l24-2 6-14 28 6 34-2M222 502l-10-34 26-10 24 22M222 502l34 10M240 506l-6 28M214 506l-4 40 30 16M140 560l22-8 2-38M162 556l14 14 28 6 8-20M138 596h44l-4-26M182 596l22-6 8-16 20 8M166 640l2-44M168 622l20 12 18-16 16 4M182 598l14 20M206 590l24 12M192 648l8-6 6 8-8 6zM218 576l10-4M48 484l10 18" />
          {/* new guinea, borneo */}
          <path d="M656 536v34M530 518l16 4 14-20" strokeWidth="2" />
        </g>
      </g>
      <g fill="none" stroke="#e8f6fd" strokeWidth="3" strokeLinejoin="round">
        <path d="M368 476l7 20 14 4-1 24-23 28 17 18h16M412 482l3 18 13 15 30 5M430 496l-2 20M444 502l-2 16M388 522l24-10M340 530l16 14-16 6M365 552l-8-26-10-6M383 572l7 54 6 70 8 70 12 6M398 570l2 11 35 19-3 25-17-8-6 8h-14M432 612l14 12 4 20-10 30 20-5M440 646l10-2" />
      </g>
    </svg>
  );
}

const LEFT = 21;
const RIGHT = 861;
const TOP = 7;
const BOTTOM = 239;
const DAY_WIDTH = 27;
const days = Array.from({ length: 31 }, (_, i) => i);
const levels = [0, 1, 2, 3, 4, 5, 6];

function SalesChart() {
  const dayX = (i: number) => LEFT + i * DAY_WIDTH + 1.5;
  const levelY = (i: number) => Math.round(BOTTOM - (i * (BOTTOM - TOP)) / 6) + 0.5;
  return (
    <svg viewBox="0 0 868 260" className="block w-full" role="img" aria-label="Sales chart">
      <g stroke="#545454" strokeOpacity="0.250">
        {days.slice(1).map((i) => (
          <line key={i} x1={dayX(i)} x2={dayX(i)} y1={TOP} y2={BOTTOM} />
        ))}
        {levels.slice(1, 6).map((i) => (
          <line key={i} x1={LEFT} x2={RIGHT} y1={levelY(i)} y2={levelY(i)} />
        ))}
      </g>
      <rect x={LEFT} y={TOP} width={RIGHT - LEFT} height={BOTTOM - TOP + 1} fill="none" stroke="#545454" strokeWidth="2" />
      <rect x={dayX(4)} y={levelY(5)} width={dayX(5) - dayX(4)} height={BOTTOM - levelY(5)} fill="#1065d2" fillOpacity="0.400" />
      <path d={`M${dayX(4)} ${BOTTOM}V${levelY(5)}H${dayX(5)}V${BOTTOM}`} fill="none" stroke="#2f74cc" />
      <path d={`M${LEFT} ${BOTTOM - 0.5}H${dayX(4)}M${dayX(5)} ${BOTTOM - 0.5}H${RIGHT}`} stroke="#6f9fcb" />
      <path d={`M${LEFT} ${BOTTOM + 0.5}H${RIGHT}`} stroke="#3f6488" />
      <g fill="#545454" className="text-[10px]">
        {days.map((i) => (
          <text key={i} x={dayX(i) - 1} y={255} textAnchor="middle">
            {String(i + 1).padStart(2, '0')}
          </text>
        ))}
        {levels.map((i) => (
          <text key={i} x={LEFT - 4} y={levelY(i) + 4} textAnchor="end">
            {(i / 5).toFixed(1)}
          </text>
        ))}
        <rect x="790" y="12" width="64" height="29" fill="#fff" fillOpacity="0.850" />
        <rect x="790.500" y="13.500" width="12" height="13" fill="#fff" stroke="#ccc" />
        <rect x="792" y="15" width="9" height="10" fill="#9fd5f1" />
        <rect x="790.500" y="27.500" width="12" height="13" fill="#fff" stroke="#ccc" />
        <rect x="792" y="29" width="9" height="10" fill="#1065d2" />
        <text x="804" y="24">Orders</text>
        <text x="804" y="38">Customers</text>
      </g>
    </svg>
  );
}

function Dashboard() {
  return (
    <main className="min-w-0 flex-1 bg-white px-5 pt-[11px] text-xs leading-[17px] text-[#666]">
      <div className="mb-[27px] flex items-baseline">
        <h1 className="text-[31px] leading-10 font-light text-[#666]">Dashboard</h1>
        <nav className="flex gap-[6px] pl-3 text-[11px]">
          <a href="#home" className="text-[#999]">Home</a>
          <span className="text-[#ccc]">/</span>
          <a href="#dashboard" className="text-[#1e91cf]">Dashboard</a>
        </nav>
      </div>

      <div className="mb-[15px] grid grid-cols-4 gap-[30px] text-white">
        {tiles.map((tile) => (
          <div key={tile.title} className="bg-[#279fe0]">
            <div className="flex justify-between bg-[#1e91cf] px-2 py-[5px]">
              <span>{tile.title}</span>
              <span className="opacity-70">{tile.percent}</span>
            </div>
            <div className="flex h-[93px] items-start justify-between p-[15px]">
              <Glyph name={tile.icon} className="h-[51px] opacity-30" />
              <span className="text-[42px] leading-[48px]">{tile.value}</span>
            </div>
            <div className="bg-[#3da9e3] px-2 py-[5px]">
              <a href="#more">View more...</a>
            </div>
          </div>
        ))}
      </div>

      <div className="mb-[17px] grid grid-cols-2 gap-[30px]">
        <Panel>
          <div className="p-[15px]">
            <WorldMap />
          </div>
        </Panel>
        <Panel
          icon="chart"
          title="Sales Analytics"
          action={
            <button type="button" aria-label="Date range" className="flex items-center gap-1 text-[#1e91cf]">
              <Glyph name="calendar" className="h-4" />
              <svg viewBox="0 0 8 4" className="mt-1 h-1 w-2 fill-current">
                <path d="M0 0h8L4 4z" />
              </svg>
            </button>
          }
        >
          <div className="p-[15px]">
            <SalesChart />
          </div>
        </Panel>
      </div>

      <div className="grid grid-cols-3 gap-[30px]">
        <Panel icon="calendar" title="Recent Activity">
          <div className="px-[15px] py-[10px]">
            <p>
              <a href="#jayne" className="text-[#1e91cf]">Jayne Brown</a> registered a new account.
            </p>
            <p className="flex items-center gap-[2px] text-[11px] text-[#777]">
              <svg viewBox="0 0 10 10" className="h-[10px] w-[10px] fill-none stroke-current">
                <circle cx="5" cy="5" r="4" strokeWidth="1.500" />
                <path d="M5 2.500v3H3" />
              </svg>
              05/12/2015 11:35:27
            </p>
          </div>
        </Panel>
        <Panel icon="cart" title="Latest Orders" className="col-span-2">
          <table className="w-full table-fixed">
            <thead>
              <tr className="text-left">
                <th className="w-[16.2%] p-2 text-right font-bold">Order ID</th>
                <th className="w-[21.4%] p-2 font-bold">Customer</th>
                <th className="w-[14.8%] p-2 font-bold">Status</th>
                <th className="w-[20%] p-2 font-bold">Date Added</th>
                <th className="w-[14%] p-2 text-right font-bold">Total</th>
                <th className="p-2 text-right font-bold">Action</th>
              </tr>
            </thead>
            <tbody>
              {orders.map((order) => (
                <tr key={order.id} className="border-t border-[#ddd]">
                  <td className="p-2 text-right">{order.id}</td>
                  <td className="p-2">{order.customer}</td>
                  <td className="p-2">{order.status}</td>
                  <td className="p-2">{order.date}</td>
                  <td className="p-2 text-right">{order.total}</td>
                  <td className="p-2">
                    <a href="#view" aria-label="View" className="ml-auto flex h-[35px] w-10 items-center justify-center rounded-[3px] border border-[#46a9c8] bg-[#5bc0de] text-white">
                      <Glyph name="eye" className="h-3" />
                    </a>
                  </td>
                </tr>
              ))}
            </tbody>
          </table>
        </Panel>
      </div>

      <footer className="pt-[57px] pb-10 text-center">
        <a href="#opencart" className="text-[#1e91cf]">OpenCart</a> © 2009-2015 All Rights Reserved.
        <br />
        <span className="bg-[#3399ff] text-white">Version 2.1.0.1</span>
      </footer>
    </main>
  );
}

function Taskbar() {
  return (
    <footer className="relative flex h-10 items-center overflow-hidden border-t border-[#1d3e63] bg-[linear-gradient(90deg,#1b5c93_0%,#2a83bd_7%,#2f93cd_11%,#3b9fd6_18%,#3194cf_30%,#3a9ad3_45%,#2f86c8_66%,#1f63ad_72%,#1d5fa8_80%,#28609f_88%,#163d6b_91%,#12335c_100%)] text-xs text-white shadow-[inset_0_1px_0_#8fc3e6]">
      <svg viewBox="0 0 80 40" className="absolute top-0 left-[1370px] h-10 w-20 blur-[2px]" aria-hidden="true">
        <path d="M16 0h16q22 20 36 42H54Q38 16 16 0z" fill="#aed3f5" />
      </svg>
      <button type="button" aria-label="Start" className="ml-2 shrink-0">
        <svg viewBox="0 0 38 38" className="h-[38px] w-[38px]">
          <defs>
            <radialGradient id="orb" cx="0.500" cy="0.950" r="0.900">
              <stop offset="0" stopColor="#3fd3ff" />
              <stop offset="0.450" stopColor="#1769a8" />
              <stop offset="1" stopColor="#a9c6dc" />
            </radialGradient>
          </defs>
          <circle cx="19" cy="19" r="17.500" fill="url(#orb)" stroke="#9cc4df" />
          <path d="M10 10q4-3 8.500-.8L17 17.500q-4-2-8.500.500z" fill="#ee6a2b" />
          <path d="M20.500 10q4 2 9-.5L27.500 17.500q-4 2.500-8.500.500z" fill="#8cc63e" />
          <path d="M8 19.500q4-2.500 8.500-.5L15 27q-4-2-8.500.500z" fill="#43a5e8" />
          <path d="M18.500 20q4 2 8.500-.5L25 27.500q-4 2.500-8.500.500z" fill="#fdc92c" />
        </svg>
      </button>
      <button type="button" aria-label="Firefox" className="ml-[14px] flex h-[38px] w-[58px] items-center justify-center rounded-xs border border-white/70 bg-linear-to-br from-[#cfe2f1] to-[#7fb3d9]">
        <svg viewBox="0 0 32 32" className="h-8 w-8">
          <circle cx="17" cy="14" r="13" fill="#1d5fa6" />
          <path d="M11 4q7-4 13 1l-7 4z" fill="#4aa0d8" />
          <path d="M3 6l3 3q4-3 8-1-3 2-2 5l4 1-3 3q2 6 8 5 7-2 7-10 0-4-2-7 5 5 5 12 0 14-15 14Q2 31 1 18 1 11 3 6z" fill="#e0541b" />
          <path d="M23 4q8 4 8 13 0 8-6 12 4-7 3-14-1-7-5-11z" fill="#f9c33b" />
        </svg>
      </button>
      <button type="button" aria-label="Mail" className="ml-[3px] flex h-[38px] w-[59px] items-center justify-center rounded-xs border border-white/60 bg-linear-to-br from-[#a9d0e6] to-[#4f9ecb]">
        <svg viewBox="0 0 32 32" className="h-8 w-8">
          <path d="M8 3l22 2-2 18-20-2z" fill="#8fc45f" />
          <path d="M6 7l21 1-1 18-20-2z" fill="#f3b455" />
          <path d="M7 13h19v13H7z" fill="#eef5fb" stroke="#9fb9cf" />
          <path d="M19 14.500h5v4h-5z" fill="#cf5a2a" />
          <path d="M10 18h6v4h-6z" fill="#4d8fca" />
          <path d="M2 28q12 1 17-2 6-3 11-1-8 7-16 7-8 0-12-4z" fill="#f0b04a" />
        </svg>
      </button>
      <button type="button" className="mb-[3px] ml-[18px] flex h-[27px] w-[30px] items-center justify-center bg-linear-to-b from-[#2b8be2] to-[#0a56b8] text-base font-bold text-[#06192f]">
        Ps
      </button>
      <div className="ml-auto flex h-full items-center font-['Roboto','Open_Sans',sans-serif]">
        <svg viewBox="0 0 8 4" className="h-1 w-2 fill-white"><path d="M0 4h8L4 0z" /></svg>
        <FaWindows className="ml-[13px] h-4 w-4" />
        <FaVolumeUp className="mr-[18px] ml-2 h-4 w-4" />
        <div className="w-[60px] text-center leading-[17px]">
          <div>21:35</div>
          <div>05/12/2015</div>
        </div>
        <button type="button" aria-label="Show desktop" className="mr-px ml-3 h-full w-3 border border-[#6d8fb3] bg-linear-to-b from-[#54779d] to-[#1b4373]" />
      </div>
    </footer>
  );
}

export default function App() {
  return (
    <div className="flex min-h-screen flex-col bg-white font-['Open_Sans','Liberation_Sans',sans-serif]">
      <Browser />
      <AdminHeader />
      <div className="relative flex flex-1">
        <Sidebar />
        <Dashboard />
        <div className="absolute bottom-0 left-0 z-30 border-t border-r border-[#b5b5b5] bg-linear-to-b from-[#f7f7f7] to-[#e3e3e3] px-1 font-['Roboto','Open_Sans',sans-serif] text-xs leading-[19px] text-[#333]">
          www.ukcanvas.co.uk/admin/index.php?route=sale/order&amp;token=D2SCxKtLOpC0SGwrUuJC3JewwPxZ3o8j
        </div>
      </div>
      <Taskbar />
    </div>
  );
}
